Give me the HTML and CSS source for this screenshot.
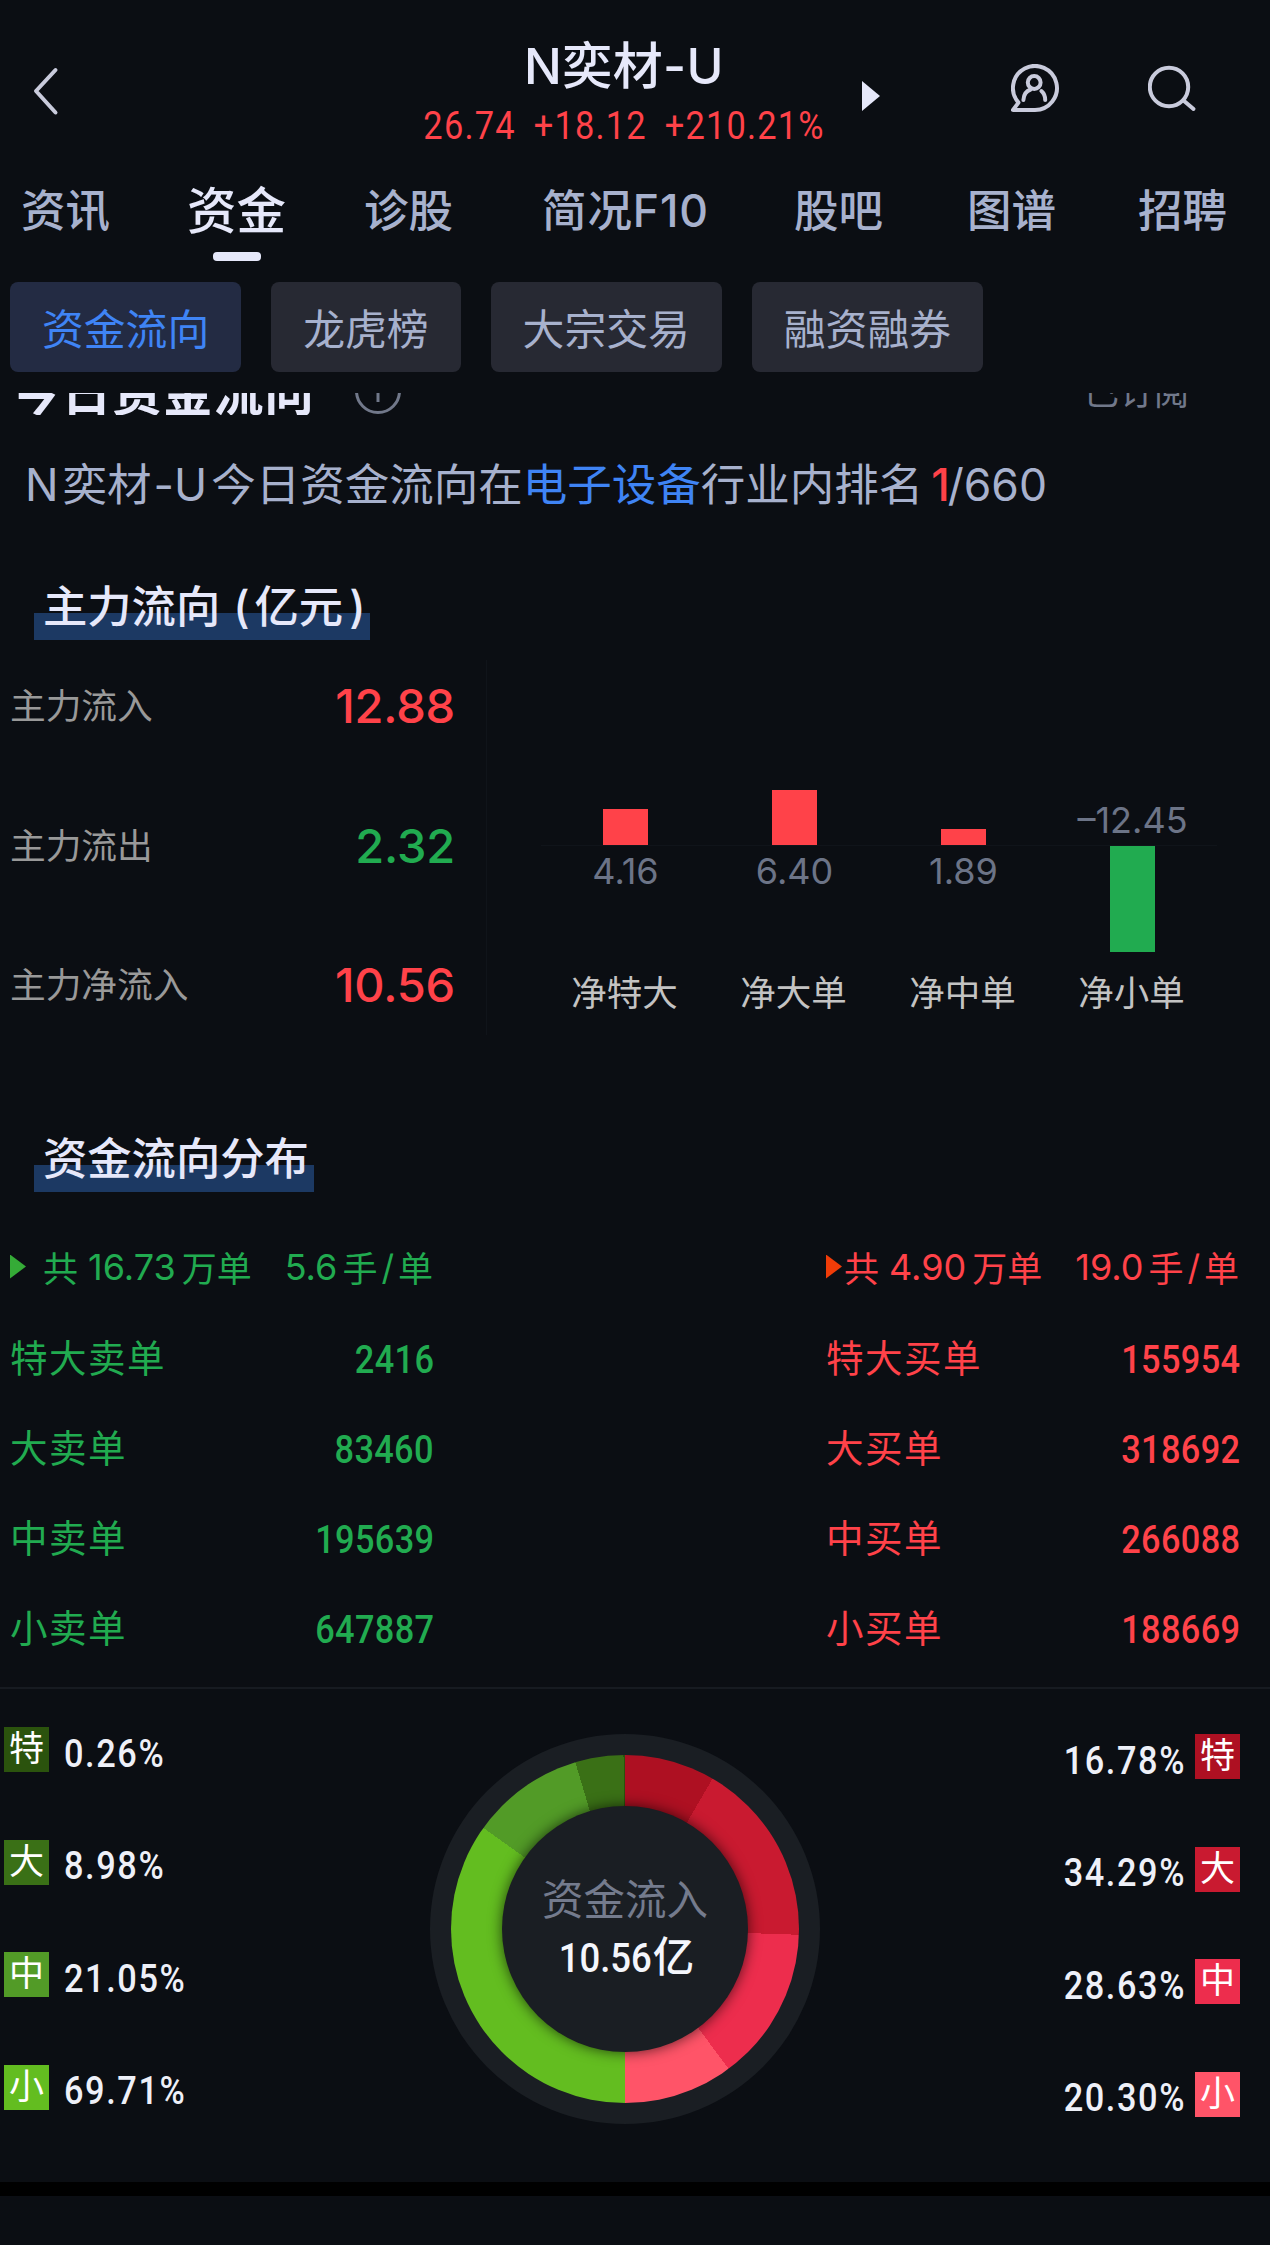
FILE: index.html
```html
<!DOCTYPE html>
<html lang="zh-CN">
<head>
  <meta charset="UTF-8" />
  <meta name="viewport" content="width=device-width, initial-scale=1" />
  <title>N奕材-U 资金流向</title>
  <link rel="stylesheet" href="styles.css">
</head>
<body>
<header class="topbar">
  <svg class="back" viewBox="0 0 28 52"><path d="M23.5 5 L4 26 L23.5 47.5" /></svg>
  <div class="stock">
    <h1>N奕材-U</h1>
    <p class="quote num"><span>26.74</span><span>+18.12</span><span>+210.21%</span></p>
  </div>
  <svg class="next" viewBox="0 0 18 30"><path d="M0 0 L18 15 L0 30 Z" /></svg>
  <svg class="icon-user" viewBox="0 0 50 50">
    <path d="M24 46 A22 22 0 1 0 7.5 38.6 L2 46 Z" />
    <circle cx="23.2" cy="18.5" r="6.4" />
    <path d="M12.4 36 C12.7 31 15.2 27 19.7 25.5 M30.4 27 C32.7 29 34.2 32 34.2 36" />
  </svg>
  <svg class="icon-search" viewBox="0 0 50 50">
    <circle cx="21" cy="23" r="19.2" />
    <path d="M35.5 36.5 L45.5 45" />
  </svg>
</header>

<nav class="tabs">
  <a>资讯</a>
  <a class="active">资金</a>
  <a>诊股</a>
  <a class="f10">简况F10</a>
  <a>股吧</a>
  <a>图谱</a>
  <a>招聘</a>
</nav>

<div class="chips">
  <button class="selected">资金流向</button>
  <button>龙虎榜</button>
  <button>大宗交易</button>
  <button>融资融券</button>
</div>

<!-- scrolled under the sticky header -->
<div class="today">
  <h2>今日资金流向</h2>
  <svg class="info" viewBox="0 0 46 46"><circle cx="23" cy="23" r="21.5" /><path d="M23 19 V34 M23 11 V14" /></svg>
  <span class="sub">已订阅</span>
</div>

<p class="rank"><span class="n">N</span>奕材<span class="u">-U</span>今日资金流向在<a>电子设备</a>行业内排名<b>1</b>/660</p>

<h3 class="section-title"><span>主力流向<i>(</i>亿元<i>)</i></span></h3>

<section class="main-flow">
  <dl class="flow-list">
    <div><dt>主力流入</dt><dd class="red">12.88</dd></div>
    <div><dt>主力流出</dt><dd class="green">2.32</dd></div>
    <div><dt>主力净流入</dt><dd class="red">10.56</dd></div>
  </dl>
  <div class="bars">
    <div class="col">
      <div class="up"><div class="bar" style="height:36px"></div></div>
      <div class="down"><span>4.16</span></div>
      <label>净特大</label>
    </div>
    <div class="col">
      <div class="up"><div class="bar" style="height:55px"></div></div>
      <div class="down"><span>6.40</span></div>
      <label>净大单</label>
    </div>
    <div class="col">
      <div class="up"><div class="bar" style="height:16px"></div></div>
      <div class="down"><span>1.89</span></div>
      <label>净中单</label>
    </div>
    <div class="col">
      <div class="up"><span>–12.45</span></div>
      <div class="down"><div class="bar" style="height:106px"></div></div>
      <label>净小单</label>
    </div>
  </div>
</section>

<h3 class="section-title second"><span>资金流向分布</span></h3>

<section class="orders">
  <div class="side green">
    <div class="summary"><i class="tri"></i><span>共</span><span class="n1">16.73</span><span>万单</span><span class="n2">5.6</span><span>手</span><span class="slash">/</span><span>单</span></div>
    <div class="line"><span>特大卖单</span><b class="num">2416</b></div>
    <div class="line"><span>大卖单</span><b class="num">83460</b></div>
    <div class="line"><span>中卖单</span><b class="num">195639</b></div>
    <div class="line"><span>小卖单</span><b class="num">647887</b></div>
  </div>
  <div class="side red">
    <div class="summary"><i class="tri"></i><span>共</span><span class="n1">4.90</span><span>万单</span><span class="n2">19.0</span><span>手</span><span class="slash">/</span><span>单</span></div>
    <div class="line"><span>特大买单</span><b class="num">155954</b></div>
    <div class="line"><span>大买单</span><b class="num">318692</b></div>
    <div class="line"><span>中买单</span><b class="num">266088</b></div>
    <div class="line"><span>小买单</span><b class="num">188669</b></div>
  </div>
</section>

<section class="share">
  <ul class="sell">
    <li><i class="s1">特</i><span class="num">0.26%</span></li>
    <li><i class="s2">大</i><span class="num">8.98%</span></li>
    <li><i class="s3">中</i><span class="num">21.05%</span></li>
    <li><i class="s4">小</i><span class="num">69.71%</span></li>
  </ul>
  <div class="donut">
    <div class="ring">
      <div class="hole">
        <p>资金流入</p>
        <strong><span class="num">10.56</span>亿</strong>
      </div>
    </div>
  </div>
  <ul class="buy">
    <li><span class="num">16.78%</span><i class="b1">特</i></li>
    <li><span class="num">34.29%</span><i class="b2">大</i></li>
    <li><span class="num">28.63%</span><i class="b3">中</i></li>
    <li><span class="num">20.30%</span><i class="b4">小</i></li>
  </ul>
</section>
<div class="gap"></div>
</body>
</html>
```

FILE: styles.css
```css
* {
  box-sizing: border-box;
  margin: 0;
  padding: 0;
}
body {
  width: 1270px;
  height: 2245px;
  overflow: hidden;
  background: #0b0e13;
  color: #e6e8fa;
  font-family: Inter, "Noto Sans CJK SC", sans-serif;
  white-space: nowrap;
}
i {
  font-style: normal;
}
/* condensed figures */
.num {
  display: inline-block;
  font-family: Roboto, "Noto Sans CJK SC", sans-serif;
  transform: scaleX(0.88);
  transform-origin: right;
}
.red {
  color: #ff4249;
}
.green {
  color: #21ab50;
}

/* header */
.topbar {
  display: grid;
  grid-template-columns: 32px 1fr 18px 131px 50px 87px 50px 72px;
  height: 170px;
  padding-left: 32px;
}
.topbar svg {
  fill: none;
  stroke: #c9cbdc;
  stroke-width: 4;
  stroke-linecap: round;
  stroke-linejoin: round;
}
.back {
  width: 28px;
  height: 52px;
  margin-top: 65px;
}
.stock {
  padding: 30px 0 0 322px;
  text-align: center;
}
.stock h1 {
  font-size: 50px;
  line-height: 72px;
  font-weight: 500;
  letter-spacing: 0.4px;
}
.quote {
  display: flex;
  justify-content: center;
  gap: 20px;
  color: #ff4249;
  font-size: 38px;
  letter-spacing: 1.3px;
  line-height: 49px;
  transform: scaleX(0.905);
  transform-origin: center;
}
.topbar .next {
  width: 18px;
  height: 30px;
  margin-top: 81px;
  fill: #e6e8fa;
  stroke: none;
}
.icon-user {
  grid-column: 5;
  width: 50px;
  height: 50px;
  margin-top: 64px;
}
.icon-search {
  grid-column: 7;
  width: 50px;
  height: 50px;
  margin-top: 64px;
}

/* tabs */
.tabs {
  display: grid;
  grid-template-columns: 166px 177px 178px 252px 173px 171px auto;
  height: 112px;
  padding: 1px 0 0 21px;
  color: #a7b1cd;
  font-size: 44.5px;
  font-weight: 500;
  line-height: 80px;
}
.tabs .active {
  position: relative;
  color: #e6e8fa;
  font-size: 49.5px;
}
.tabs .active::after {
  content: "";
  position: absolute;
  left: 26px;
  top: 81px;
  width: 48px;
  height: 9px;
  border-radius: 4px;
  background: #e6e8fa;
}
.tabs .f10 {
  letter-spacing: 0.9px;
}

/* chips */
.chips {
  display: flex;
  gap: 30px;
  height: 111px;
  padding-left: 10px;
}
.chips button {
  height: 90px;
  padding: 0 32px;
  border: none;
  border-radius: 8px;
  background: #272933;
  color: #a7b1cd;
  font-family: inherit;
  font-size: 41.8px;
}
.chips .selected {
  background: #232b43;
  color: #3f84f5;
}

.today {
  display: flex;
  align-items: flex-end;
  height: 22px;
  padding: 0 81px 0 11px;
  overflow: hidden;
}
.today h2 {
  font-size: 50px;
  line-height: 60px;
  font-weight: 700;
  letter-spacing: 0.6px;
  margin-bottom: -8px;
}
.info {
  width: 46px;
  height: 46px;
  margin: 0 0 1px 40px;
  fill: none;
  stroke: #71788a;
  stroke-width: 3;
}
.sub {
  margin-left: auto;
  margin-bottom: 1px;
  color: #71788a;
  font-size: 35px;
  line-height: 44px;
}

.rank {
  height: 125px;
  margin-top: 35px;
  padding-left: 25px;
  color: #a7b1cd;
  font-size: 44.5px;
  line-height: 70px;
}
.rank .n {
  margin-right: 4px;
}
.rank .u {
  margin: 0 4px 0 2px;
}
.rank a {
  color: #3f84f5;
}
.rank b {
  margin: 0 -2px 0 8px;
  color: #ff4249;
  font-weight: 500;
}

.section-title {
  height: 85px;
  padding-left: 34px;
  font-size: 44.3px;
  line-height: 65px;
  font-weight: 500;
}
.section-title span {
  display: inline-block;
  height: 54px;
  padding: 0 4px 0 9px;
  background: linear-gradient(#1c3963, #1c3963) 0 100% / 100% 27px no-repeat;
  line-height: 42px;
}
.section-title i {
  margin: 0 5px 0 13px;
}
.section-title i:last-child {
  margin: 0 0 0 6px;
}

/* main flow */
.main-flow {
  display: flex;
  height: 375px;
}
.flow-list {
  width: 487px;
  height: 375px;
  padding: 0 31px 0 10px;
  border-right: 1px solid #10141a;
}
.flow-list div {
  display: flex;
  justify-content: space-between;
  height: 139.5px;
  padding-top: 16px;
  line-height: 60px;
}
.flow-list dt {
  color: #999;
  font-size: 35.7px;
}
.flow-list dd {
  font-size: 47px;
  font-weight: 500;
  letter-spacing: -0.2px;
}
.bars {
  display: flex;
  padding-left: 54px;
}
.col {
  width: 169px;
  text-align: center;
}
.up,
.down {
  display: flex;
  flex-direction: column;
  align-items: center;
  color: #6c7487;
  font-size: 36px;
  line-height: 50px;
}
.up {
  height: 186px;
  justify-content: flex-end;
  border-bottom: 1px solid #10141a;
}
.down {
  height: 123px;
}
.bar {
  width: 45px;
  background: #ff4249;
}
.down .bar {
  background: #21ab50;
}
.col label {
  display: block;
  padding-right: 2px;
  color: #c3c3c3;
  font-size: 35.5px;
  line-height: 50px;
}

.second {
  margin-top: 92px;
}
.second span {
  padding-right: 5px;
}

/* orders */
.orders {
  display: flex;
  justify-content: space-between;
  height: 475px;
  padding: 0 30px 0 10px;
}
.side {
  width: 424px;
}
.side.red {
  width: 414px;
}
.summary {
  display: flex;
  align-items: center;
  height: 102px;
  padding-top: 7px;
  font-size: 35px;
}
.tri {
  flex: none;
  width: 16px;
  height: 24px;
  margin-right: 17px;
  background: #35ab37;
  clip-path: polygon(0 0, 100% 50%, 0 100%);
}
.red .tri {
  margin-right: 2px;
  background: #f03c08;
}
.n1,
.n2 {
  font-size: 36px;
}
.n1 {
  margin: 0 6px 0 10px;
}
.n2 {
  margin: 0 5px 0 33px;
}
.slash {
  margin: 0 4px;
}
.line {
  display: flex;
  justify-content: space-between;
  height: 90px;
  font-size: 37.5px;
  letter-spacing: 1.5px;
  line-height: 90px;
}
.line b {
  padding-top: 1px;
  font-size: 39px;
  font-weight: 500;
  letter-spacing: 0.4px;
}

/* share */
.share {
  display: flex;
  justify-content: space-between;
  height: 495px;
  padding: 0 30px 0 4px;
  border-top: 2px solid #171b21;
}
.share ul {
  width: 240px;
  padding-top: 38px;
  list-style: none;
}
.share .sell {
  width: 246px;
}
.share .buy {
  padding-top: 45px;
}
.share li {
  display: flex;
  align-items: center;
  height: 45px;
  margin-bottom: 67.5px;
  color: #eef0f8;
  font-size: 39px;
  font-weight: 500;
}
.share li i {
  width: 45px;
  height: 45px;
  color: #fff;
  font-size: 35px;
  font-weight: 400;
  line-height: 43px;
  text-align: center;
}
.share li .num {
  padding-top: 8px;
  letter-spacing: 1.8px;
}
.sell .num {
  margin-left: 15px;
  transform-origin: left;
}
.buy li {
  justify-content: flex-end;
}
.buy .num {
  margin-right: 9px;
}
.s1 { background: #2b530d; }
.s2 { background: #3a7016; }
.s3 { background: #529b27; }
.s4 { background: #63bd20; }
.b1 { background: #ae1022; }
.b2 { background: #c91a30; }
.b3 { background: #ed2d4d; }
.b4 { background: #ff5468; }
.donut {
  width: 390px;
  height: 390px;
  margin-top: 45px;
  padding: 21px;
  border-radius: 50%;
  background: #1a1e23;
}
.ring {
  width: 348px;
  height: 348px;
  padding: 51px;
  border-radius: 50%;
  background: conic-gradient(
    #ae1022 0 30.2deg,
    #c91a30 30.2deg 91.9deg,
    #ed2d4d 91.9deg 143.5deg,
    #ff5468 143.5deg 180deg,
    #63bd20 180deg 305.5deg,
    #529b27 305.5deg 343.4deg,
    #3a7016 343.4deg 359.5deg,
    #2b530d 359.5deg
  );
}
.hole {
  width: 246px;
  height: 246px;
  padding-top: 64px;
  border-radius: 50%;
  background: #1a1e23;
  box-shadow: 0 0 14px rgba(0,0,0,0.65);
  text-align: center;
}
.hole p {
  color: #747b8d;
  font-size: 41.5px;
  line-height: 60px;
}
.hole strong {
  display: block;
  color: #f4f6fc;
  font-size: 41.5px;
  font-weight: 500;
  line-height: 54px;
}
.hole .num {
  margin: 0 1px 0 -10px;
}
.gap {
  height: 14px;
  background: #000;
}
```
